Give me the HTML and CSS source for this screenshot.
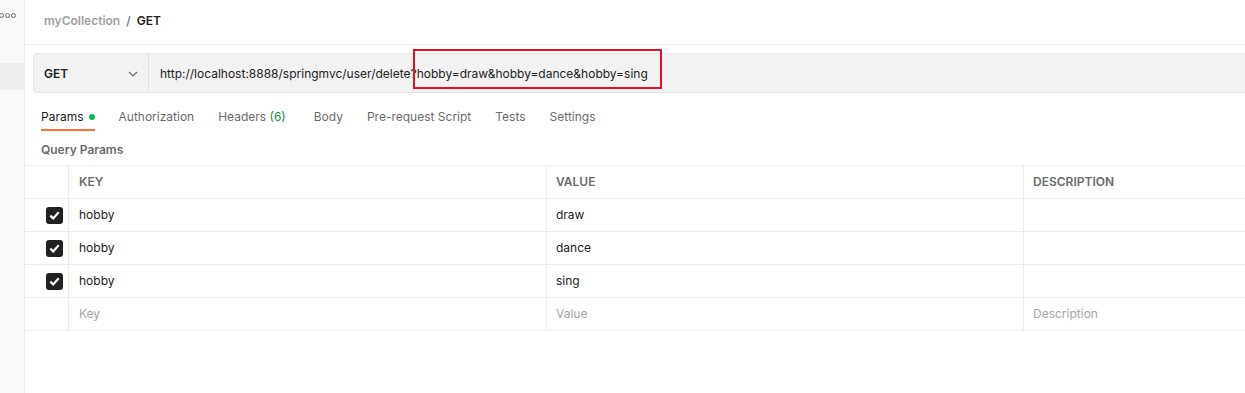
FILE: index.html
```html
<!DOCTYPE html>
<html>
<head>
<meta charset="utf-8">
<link rel="stylesheet" href="styles.css">
</head>
<body>
<div class="app">
  <aside class="sidebar">
    <div class="dots"><span></span><span></span><span></span></div>
    <div class="side-sel"></div>
  </aside>
  <main class="main">
    <header class="crumb">
      <span class="coll">myCollection</span>
      <span class="sep">/</span>
      <span class="req">GET</span>
    </header>
    <div class="body">
      <div class="urlbar">
        <div class="method">
          <span>GET</span>
          <svg class="chev" width="10" height="6" viewBox="0 0 10 6"><path d="M1 1l4 4 4-4" fill="none" stroke="#6b6b6b" stroke-width="1.2"/></svg>
        </div>
        <div class="url">http://localhost:8888/springmvc/user/delete?hobby=draw&amp;hobby=dance&amp;hobby=sing</div>
        <div class="highlight"></div>
      </div>
      <nav class="tabs">
        <span class="tab active">Params<i class="dot"></i></span>
        <span class="tab">Authorization</span>
        <span class="tab hdr">Headers <em class="count">(6)</em></span>
        <span class="tab">Body</span>
        <span class="tab">Pre-request Script</span>
        <span class="tab">Tests</span>
        <span class="tab">Settings</span>
      </nav>
      <div class="qp">Query Params</div>
    </div>
    <div class="table">
      <div class="row head">
        <div class="c chk"></div>
        <div class="c key">KEY</div>
        <div class="c val">VALUE</div>
        <div class="c desc">DESCRIPTION</div>
      </div>
      <div class="row">
        <div class="c chk"><span class="box"><svg width="11" height="9" viewBox="0 0 11 9"><path d="M1.3 4.6l2.9 2.8 5.5-6.2" fill="none" stroke="#fff" stroke-width="2.2"/></svg></span></div>
        <div class="c key">hobby</div>
        <div class="c val">draw</div>
        <div class="c desc"></div>
      </div>
      <div class="row">
        <div class="c chk"><span class="box"><svg width="11" height="9" viewBox="0 0 11 9"><path d="M1.3 4.6l2.9 2.8 5.5-6.2" fill="none" stroke="#fff" stroke-width="2.2"/></svg></span></div>
        <div class="c key">hobby</div>
        <div class="c val">dance</div>
        <div class="c desc"></div>
      </div>
      <div class="row">
        <div class="c chk"><span class="box"><svg width="11" height="9" viewBox="0 0 11 9"><path d="M1.3 4.6l2.9 2.8 5.5-6.2" fill="none" stroke="#fff" stroke-width="2.2"/></svg></span></div>
        <div class="c key">hobby</div>
        <div class="c val">sing</div>
        <div class="c desc"></div>
      </div>
      <div class="row ph">
        <div class="c chk"></div>
        <div class="c key">Key</div>
        <div class="c val">Value</div>
        <div class="c desc">Description</div>
      </div>
    </div>
  </main>
</div>
</body>
</html>
```
FILE: styles.css
```css
html, body {
  margin: 0;
  padding: 0;
  background: #fff;
  overflow: hidden;
}
body {
  font-family: Inter, "Noto Sans", sans-serif;
  font-size: 12px;
  color: #212121;
}
.app {
  display: flex;
  height: 393px;
  width: 1245px;
  overflow: hidden;
}
.sidebar {
  width: 24px;
  flex: none;
  background: #f9f9f9;
  border-right: 1px solid #ededed;
}
.dots {
  display: flex;
  gap: 1px;
  padding: 13px 0 0 0;
  margin-left: -1px;
}
.dots span {
  width: 3px;
  height: 3px;
  border: 1px solid #6b6b6b;
  border-radius: 50%;
}
.side-sel {
  margin-top: 45px;
  height: 27px;
  background: #ededed;
}
.main {
  flex: 1;
  min-width: 0;
}
.crumb {
  height: 45px;
  box-sizing: border-box;
  border-bottom: 1px solid #ededed;
  display: flex;
  align-items: center;
  padding: 0 0 4px 19px;
  font-weight: 600;
  font-size: 12px;
}
.coll { color: #a0a0a0; }
.sep { color: #6b6b6b; margin: 0 6px; font-weight: 500; }
.req { color: #212121; }
.body {
  padding-left: 8px;
}
.urlbar {
  margin-top: 8px;
  height: 40px;
  box-sizing: border-box;
  background: #f2f2f2;
  border: 1px solid #e6e6e6;
  border-right: none;
  border-radius: 4px 0 0 4px;
  display: flex;
  align-items: center;
  position: relative;
  margin-right: -8px;
}
.method {
  width: 115px;
  height: 100%;
  box-sizing: border-box;
  border-right: 1px solid #e0e0e0;
  display: flex;
  align-items: center;
  justify-content: space-between;
  padding: 0 10px 0 10px;
  font-weight: 600;
  color: #212121;
}
.chev { margin-top: 1px; }
.url {
  padding-left: 11px;
  color: #212121;
  white-space: nowrap;
}
.highlight {
  position: absolute;
  left: 379px;
  top: -5px;
  width: 245px;
  height: 36px;
  border: 2px solid #e81123;
}
.tabs {
  display: flex;
  margin-top: 12px;
  padding-left: 8px;
  height: 26px;
}
.tab {
  color: #6b6b6b;
  margin-right: 24px;
  height: 26px;
  line-height: 24px;
  box-sizing: border-box;
}
.tab.active {
  color: #212121;
  border-bottom: 2px solid #ff6c37;
}
.tab.hdr { margin-right: 28px; }
.dot {
  display: inline-block;
  width: 6px;
  height: 6px;
  border-radius: 50%;
  background: #0cbb52;
  margin-left: 5px;
  vertical-align: 1px;
}
.count { font-style: normal; color: #1c8a4a; }
.qp {
  padding-left: 8px;
  margin-top: 10px;
  font-weight: 600;
  font-size: 12px;
  color: #6b6b6b;
  height: 18px;
  line-height: 18px;
}
.table {
  margin-top: 6px;
  border-top: 1px solid #ededed;
  width: 1240px;
}
.row {
  display: flex;
  height: 33px;
  border-bottom: 1px solid #ededed;
  box-sizing: border-box;
}
.c {
  display: flex;
  align-items: center;
  padding: 0 0 2px 9px;
  box-sizing: border-box;
  border-right: 1px solid #ededed;
}
.chk { width: 44px; padding: 0 5px 0 0; justify-content: flex-end; }
.key { width: 478px; padding-left: 10px; }
.val { width: 477px; }
.desc { flex: 1; border-right: none; }
.head .c { font-weight: 600; font-size: 12px; color: #6b6b6b; }
.box {
  width: 17px;
  height: 17px;
  border-radius: 3px;
  background: #212121;
  display: flex;
  align-items: center;
  justify-content: center;
}
.ph .c { color: #a6a6a6; }
```
